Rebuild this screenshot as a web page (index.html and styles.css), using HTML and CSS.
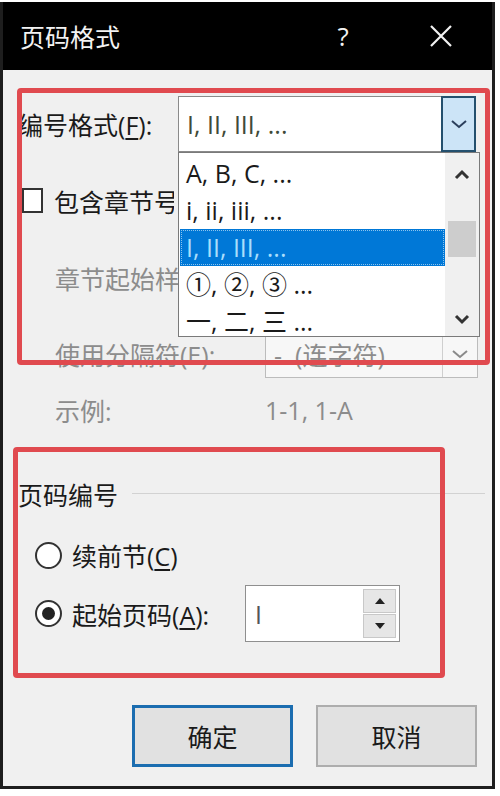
FILE: index.html
```html
<!DOCTYPE html>
<html>
<head>
  <meta charset="UTF-8">
  <title>页码格式</title>
  <link rel="stylesheet" href="styles.css">
</head>
<body>
  <div class="dialog">
    <div class="titlebar">
      <span class="title">页码格式</span>
      <span class="help">?</span>
      <span class="close">
        <svg width="24" height="24" viewBox="0 0 24 24"><path d="M2 2 L22 22 M22 2 L2 22" stroke="#f2f2f2" stroke-width="2.2" fill="none"/></svg>
      </span>
    </div>

    <div class="content">
      <div class="row first">
        <span class="label">编号格式(<u>F</u>):</span>
        <div class="combo focused">
          <span class="combo-text">I, II, III, ...</span>
          <span class="combo-btn active">
            <svg width="18" height="12" viewBox="0 0 18 12"><path d="M2 3 L9 9 L16 3" stroke="#2b3f5c" stroke-width="2" fill="none"/></svg>
          </span>

          <div class="dropdown">
            <ul class="options">
              <li>A, B, C, ...</li>
              <li>i, ii, iii, ...</li>
              <li class="selected">I, II, III, ...</li>
              <li>①, ②, ③ ...</li>
              <li>一, 二, 三 ...</li>
            </ul>
            <div class="scrollbar">
              <svg width="18" height="12" viewBox="0 0 18 12"><path d="M3 9 L9 3 L15 9" stroke="#333" stroke-width="3" fill="none"/></svg>
              <div class="thumb"></div>
              <svg class="down" width="18" height="12" viewBox="0 0 18 12"><path d="M3 3 L9 9 L15 3" stroke="#333" stroke-width="3" fill="none"/></svg>
            </div>
          </div>
        </div>
      </div>

      <div class="row check-row">
        <span class="checkbox"></span>
        <span class="check-label">包含章节号(<u>N</u>)</span>
      </div>

      <div class="row sub sub-start">
        <span class="sub-label clipped">章节起始样式(P):</span>
      </div>

      <div class="row sub sub-sep">
        <span class="sub-label">使用分隔符(E):</span>
        <div class="combo disabled">
          <span class="combo-text">-&nbsp;&nbsp;(连字符)</span>
          <span class="combo-btn">
            <svg width="18" height="12" viewBox="0 0 18 12"><path d="M2 3 L9 9 L16 3" stroke="#8a8a8a" stroke-width="2" fill="none"/></svg>
          </span>
        </div>
      </div>

      <div class="row sub sub-example">
        <span class="sub-label">示例:</span>
        <span class="example">1-1, 1-A</span>
      </div>

      <div class="group-head">
        <span>页码编号</span>
        <span class="group-line"></span>
      </div>

      <div class="row radio-row">
        <span class="radio"></span>
        <span class="radio-label">续前节(<u>C</u>)</span>
      </div>

      <div class="row radio-row start">
        <span class="radio checked"></span>
        <span class="radio-label wide">起始页码(<u>A</u>):</span>
        <div class="spin">
          <span class="spin-value">I</span>
          <div class="spin-btns">
            <span class="spin-btn"><svg width="12" height="8" viewBox="0 0 12 8"><path d="M1 7 L6 1 L11 7 Z" fill="#222"/></svg></span>
            <span class="spin-btn"><svg width="12" height="8" viewBox="0 0 12 8"><path d="M1 1 L6 7 L11 1 Z" fill="#222"/></svg></span>
          </div>
        </div>
      </div>

      <div class="buttons">
        <button class="btn default">确定</button>
        <button class="btn">取消</button>
      </div>

      <!-- red annotation frames -->
      <div class="mark mark-top"></div>
      <div class="mark mark-bottom"></div>
    </div>
  </div>
</body>
</html>
```

FILE: styles.css
```css
body {
  margin: 0;
  background: #fff;
  font-family: "Open Sans", "Noto Sans CJK SC", sans-serif;
  font-size: 25px;
  color: #1a1a1a;
}

.dialog {
  width: 489px;
  margin-top: 2px;
  border: 3px solid #1e1e1e;
  border-top: none;
}

.titlebar {
  height: 68px;
  background: #000;
  display: flex;
  align-items: center;
  padding-left: 17px;
  color: #f2f2f2;
}

.title {
  flex: 1;
  font-size: 25px;
}

.help {
  width: 50px;
  text-align: center;
  font-size: 26px;
}

.close {
  width: 60px;
  margin-left: 43px;
  margin-right: 21px;
  display: flex;
  justify-content: center;
}

.content {
  position: relative;
  display: flow-root;
  height: 716px;
  background: #f0f0f0;
}

.row {
  display: flex;
  align-items: center;
}

.first {
  margin-top: 26px;
  padding-left: 15px;
  height: 56px;
}

.label {
  width: 160px;
  white-space: nowrap;
}

u {
  text-decoration: underline;
  text-underline-offset: 3px;
}

.combo {
  position: relative;
  display: flex;
  align-items: center;
  background: #fff;
  box-sizing: border-box;
}

.combo.focused {
  width: 298px;
  height: 56px;
  border: 1px solid #8a8a8a;
}

.combo-text {
  flex: 1;
  padding-left: 8px;
  white-space: nowrap;
}

.focused .combo-text {
  color: #3f4a38;
}

.combo-btn {
  width: 35px;
  align-self: stretch;
  display: flex;
  align-items: center;
  justify-content: center;
  box-sizing: border-box;
}

.combo-btn.active {
  background: #cce4f7;
  border: 2px solid #24506e;
  margin: -1px -1px -1px 0;
}

.dropdown {
  position: absolute;
  top: 55px;
  left: -1px;
  width: 302px;
  height: 185px;
  box-sizing: border-box;
  background: #fff;
  border: 1px solid #7a7a7a;
  display: flex;
  z-index: 2;
  overflow: hidden;
}

.options {
  list-style: none;
  margin: 0;
  padding: 2px 0 0 1px;
  flex: 1;
}

.options li {
  height: 37px;
  line-height: 37px;
  padding-left: 6px;
  white-space: nowrap;
}

.options li.selected {
  background: #0078d7;
  color: #a9defc;
  outline: 1px dotted #8cc4ee;
  outline-offset: -2px;
}

.scrollbar {
  width: 34px;
  background: #f0f0f0;
  display: flex;
  flex-direction: column;
  align-items: center;
  padding-top: 16px;
}

.thumb {
  width: 28px;
  height: 36px;
  background: #cdcdcd;
  margin-top: 40px;
}

.scrollbar .down {
  margin-top: 56px;
}

.check-row {
  margin-top: 36px;
  height: 25px;
  padding-left: 19px;
}

.checkbox {
  flex: none;
  width: 17px;
  height: 21px;
  border: 2px solid #333;
  background: #fff;
}

/* the open list hides the rest of these labels */
.check-label {
  margin-left: 11px;
  width: 120px;
  overflow: hidden;
  white-space: nowrap;
}

.sub {
  height: 48px;
  padding-left: 52px;
  color: #8c8c8c;
}

.sub-start {
  margin-top: 41px;
}

.sub-sep {
  margin-top: 28px;
}

.sub-example {
  margin-top: 8px;
}

.sub-label {
  width: 210px;
  white-space: nowrap;
}

.sub-label.clipped {
  width: 123px;
  overflow: hidden;
}

.combo.disabled {
  width: 213px;
  height: 48px;
  border: 1px solid #bcbcbc;
  background: #f7f7f7;
  color: #8c8c8c;
}

.combo.disabled .combo-btn {
  border-left: 1px solid #cfcfcf;
}

.example {
  white-space: nowrap;
}

.group-head {
  display: flex;
  align-items: center;
  height: 28px;
  margin-top: 46px;
  padding-left: 15px;
}

.group-line {
  flex: 1;
  height: 1px;
  background: #d2d2d2;
  margin: 0 7px 2px 14px;
}

.radio-row {
  height: 40px;
  margin-top: 27px;
  padding-left: 32px;
}

.radio {
  width: 23px;
  height: 23px;
  border: 2px solid #333;
  border-radius: 50%;
  background: #fff;
  position: relative;
}

.radio.checked::after {
  content: "";
  position: absolute;
  left: 5px;
  top: 5px;
  width: 13px;
  height: 13px;
  border-radius: 50%;
  background: #222;
}

.radio-label {
  margin-left: 10px;
  white-space: nowrap;
}

.radio-label.wide {
  width: 173px;
}

.start {
  height: 57px;
  margin-top: 10px;
}

.spin {
  width: 155px;
  height: 57px;
  box-sizing: border-box;
  border: 1px solid #8f8f8f;
  background: #fff;
  display: flex;
  align-items: center;
}

.spin-value {
  flex: 1;
  padding-left: 9px;
  color: #555;
}

.spin-btns {
  width: 33px;
  margin-right: 3px;
  display: flex;
  flex-direction: column;
  gap: 1px;
}

.spin-btn {
  height: 22px;
  background: #e6e6e6;
  border: 1px solid #c8c8c8;
  display: flex;
  align-items: center;
  justify-content: center;
}

.buttons {
  display: flex;
  justify-content: flex-end;
  gap: 23px;
  margin-top: 63px;
  padding-right: 15px;
}

.btn {
  width: 161px;
  height: 62px;
  background: #e1e1e1;
  border: 2px solid #adadad;
  font-family: inherit;
  font-size: 25px;
  color: #1a1a1a;
}

.btn.default {
  border: 3px solid #1b6db0;
}

.mark {
  position: absolute;
  border: 5px solid #e04a4f;
  border-radius: 4px;
  box-sizing: border-box;
  z-index: 3;
}

.mark-top {
  left: 14px;
  top: 18px;
  width: 473px;
  height: 277px;
}

.mark-bottom {
  left: 10px;
  top: 377px;
  width: 432px;
  height: 231px;
}
```
